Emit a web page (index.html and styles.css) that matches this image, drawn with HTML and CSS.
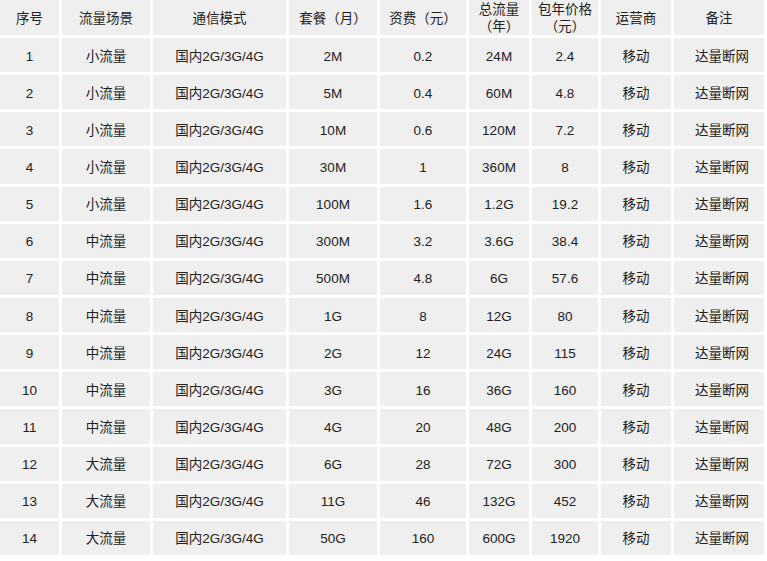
FILE: index.html
```html
<!DOCTYPE html>
<html lang="zh">
<head>
<meta charset="utf-8">
<link rel="stylesheet" href="styles.css">
</head>
<body>
<div class="table">
  <div class="cell head">序号</div><div class="cell head">流量场景</div><div class="cell head">通信模式</div><div class="cell head">套餐（月）</div><div class="cell head">资费（元）</div><div class="cell head">总流量（年）</div><div class="cell head">包年价格（元）</div><div class="cell head">运营商</div><div class="cell head">备注</div>

  <div class="cell">1</div><div class="cell">小流量</div><div class="cell">国内2G/3G/4G</div><div class="cell">2M</div><div class="cell">0.2</div><div class="cell">24M</div><div class="cell">2.4</div><div class="cell">移动</div><div class="cell note">达量断网</div>
  <div class="cell">2</div><div class="cell">小流量</div><div class="cell">国内2G/3G/4G</div><div class="cell">5M</div><div class="cell">0.4</div><div class="cell">60M</div><div class="cell">4.8</div><div class="cell">移动</div><div class="cell note">达量断网</div>
  <div class="cell">3</div><div class="cell">小流量</div><div class="cell">国内2G/3G/4G</div><div class="cell">10M</div><div class="cell">0.6</div><div class="cell">120M</div><div class="cell">7.2</div><div class="cell">移动</div><div class="cell note">达量断网</div>
  <div class="cell">4</div><div class="cell">小流量</div><div class="cell">国内2G/3G/4G</div><div class="cell">30M</div><div class="cell">1</div><div class="cell">360M</div><div class="cell">8</div><div class="cell">移动</div><div class="cell note">达量断网</div>
  <div class="cell">5</div><div class="cell">小流量</div><div class="cell">国内2G/3G/4G</div><div class="cell">100M</div><div class="cell">1.6</div><div class="cell">1.2G</div><div class="cell">19.2</div><div class="cell">移动</div><div class="cell note">达量断网</div>
  <div class="cell">6</div><div class="cell">中流量</div><div class="cell">国内2G/3G/4G</div><div class="cell">300M</div><div class="cell">3.2</div><div class="cell">3.6G</div><div class="cell">38.4</div><div class="cell">移动</div><div class="cell note">达量断网</div>
  <div class="cell">7</div><div class="cell">中流量</div><div class="cell">国内2G/3G/4G</div><div class="cell">500M</div><div class="cell">4.8</div><div class="cell">6G</div><div class="cell">57.6</div><div class="cell">移动</div><div class="cell note">达量断网</div>
  <div class="cell">8</div><div class="cell">中流量</div><div class="cell">国内2G/3G/4G</div><div class="cell">1G</div><div class="cell">8</div><div class="cell">12G</div><div class="cell">80</div><div class="cell">移动</div><div class="cell note">达量断网</div>
  <div class="cell">9</div><div class="cell">中流量</div><div class="cell">国内2G/3G/4G</div><div class="cell">2G</div><div class="cell">12</div><div class="cell">24G</div><div class="cell">115</div><div class="cell">移动</div><div class="cell note">达量断网</div>
  <div class="cell">10</div><div class="cell">中流量</div><div class="cell">国内2G/3G/4G</div><div class="cell">3G</div><div class="cell">16</div><div class="cell">36G</div><div class="cell">160</div><div class="cell">移动</div><div class="cell note">达量断网</div>
  <div class="cell">11</div><div class="cell">中流量</div><div class="cell">国内2G/3G/4G</div><div class="cell">4G</div><div class="cell">20</div><div class="cell">48G</div><div class="cell">200</div><div class="cell">移动</div><div class="cell note">达量断网</div>
  <div class="cell">12</div><div class="cell">大流量</div><div class="cell">国内2G/3G/4G</div><div class="cell">6G</div><div class="cell">28</div><div class="cell">72G</div><div class="cell">300</div><div class="cell">移动</div><div class="cell note">达量断网</div>
  <div class="cell">13</div><div class="cell">大流量</div><div class="cell">国内2G/3G/4G</div><div class="cell">11G</div><div class="cell">46</div><div class="cell">132G</div><div class="cell">452</div><div class="cell">移动</div><div class="cell note">达量断网</div>
  <div class="cell">14</div><div class="cell">大流量</div><div class="cell">国内2G/3G/4G</div><div class="cell">50G</div><div class="cell">160</div><div class="cell">600G</div><div class="cell">1920</div><div class="cell">移动</div><div class="cell note">达量断网</div>
</div>
</body>
</html>
```

FILE: styles.css
```css
html, body {
  margin: 0;
  padding: 0;
  background: #ffffff;
}

body {
  font-family: "Liberation Sans", "Noto Sans CJK SC", sans-serif;
  font-size: 13.5px;
  color: #222222;
}

.table {
  display: grid;
  grid-template-columns: 59px 88px 133px 88px 86px 60px 66px 70px 90px;
  grid-template-rows: 35px;
  grid-auto-rows: 34.15px;
  gap: 3px;
  width: 764px;
}

.cell {
  background: #efefef;
  display: flex;
  align-items: center;
  justify-content: center;
  text-align: center;
  padding: 3px 2px 0;
  line-height: 16px;
  box-sizing: border-box;
}

.cell.head {
  padding: 1px 2px 0;
  line-height: 17px;
}

.cell.note {
  padding-left: 8px;
}
```
